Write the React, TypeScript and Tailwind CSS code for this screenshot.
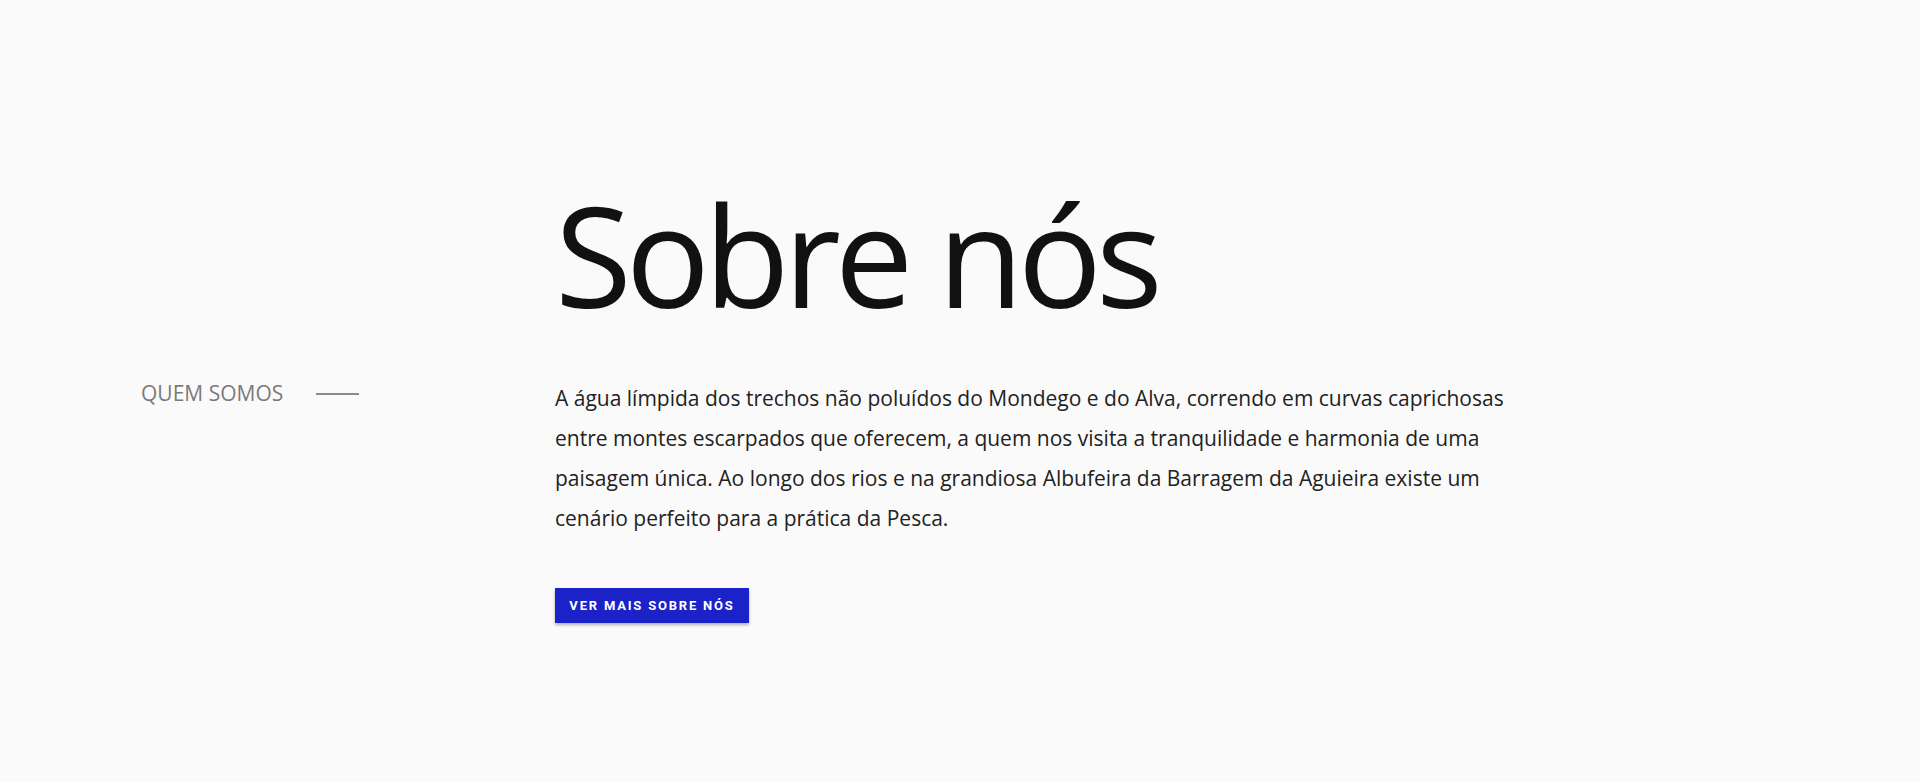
const App = () => {
  return (
    <div className="min-h-[782px] w-full bg-[#fafafa] font-['Open_Sans',sans-serif]">
      <section className="flex pl-[141px] pt-[170px]">
        <div className="w-[414px] shrink-0 pt-[213px]">
          <div className="flex items-center gap-[33px]">
            <span className="text-[21px] leading-none text-[#7a7a7a]">QUEM SOMOS</span>
            <span className="block h-[2px] w-[43px] bg-[#8a8a8a]" />
          </div>
        </div>
        <div className="w-[975px]">
          <h1 className="text-[140px] leading-[168px] font-normal tracking-[-6px] text-[#111111]">Sobre nós</h1>
          <p className="mt-[40px] text-[21px] leading-[40px] text-[#222222]">
            A água límpida dos trechos não poluídos do Mondego e do Alva, correndo em curvas caprichosas entre montes escarpados que oferecem, a quem nos visita a tranquilidade e harmonia de uma paisagem única. Ao longo dos rios e na grandiosa Albufeira da Barragem da Aguieira existe um cenário perfeito para a prática da Pesca.
          </p>
          <button className="mt-[50px] h-[35px] w-[194px] bg-[#1b22c7] text-[13px] font-bold uppercase tracking-[1.8px] text-white shadow-[0_2px_3px_rgba(0,0,0,0.3)] font-['Roboto',sans-serif]">
            Ver mais sobre nós
          </button>
        </div>
      </section>
    </div>
  )
}

export default App
